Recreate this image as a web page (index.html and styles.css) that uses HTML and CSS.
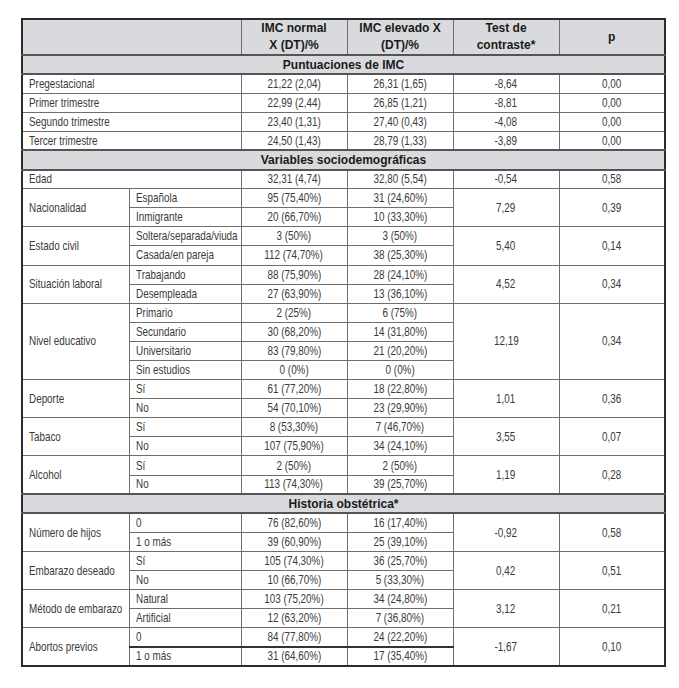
FILE: index.html
```html
<!DOCTYPE html>
<html>
    <head>
        <meta charset="utf-8">
        <title>IMC tabla</title>
        <link rel="stylesheet" href="styles.css">
    </head>
    <body>
        <table class="imc">
            <colgroup>
                <col class="c-label">
                <col class="c-sub">
                <col class="c-num">
                <col class="c-num">
                <col class="c-num">
                <col class="c-num">
            </colgroup>
            <thead>
                <tr class="head">
                    <th colspan="2"></th>
                    <th>IMC normal<br>X (DT)/%</th>
                    <th>IMC elevado X<br>(DT)/%</th>
                    <th>Test de<br>contraste*</th>
                    <th>p</th>
                </tr>
            </thead>
            <tbody>
                <tr class="section"><td colspan="6">Puntuaciones de IMC</td></tr>
                <tr><td colspan="2" class="lbl"><span>Pregestacional</span></td><td><span>21,22 (2,04)</span></td><td><span>26,31 (1,65)</span></td><td><span>-8,64</span></td><td><span>0,00</span></td></tr>
                <tr><td colspan="2" class="lbl"><span>Primer trimestre</span></td><td><span>22,99 (2,44)</span></td><td><span>26,85 (1,21)</span></td><td><span>-8,81</span></td><td><span>0,00</span></td></tr>
                <tr><td colspan="2" class="lbl"><span>Segundo trimestre</span></td><td><span>23,40 (1,31)</span></td><td><span>27,40 (0,43)</span></td><td><span>-4,08</span></td><td><span>0,00</span></td></tr>
                <tr><td colspan="2" class="lbl"><span>Tercer trimestre</span></td><td><span>24,50 (1,43)</span></td><td><span>28,79 (1,33)</span></td><td><span>-3,89</span></td><td><span>0,00</span></td></tr>

                <tr class="section"><td colspan="6">Variables sociodemográficas</td></tr>
                <tr><td colspan="2" class="lbl"><span>Edad</span></td><td><span>32,31 (4,74)</span></td><td><span>32,80 (5,54)</span></td><td><span>-0,54</span></td><td><span>0,58</span></td></tr>
                <tr><td rowspan="2" class="lbl"><span>Nacionalidad</span></td><td class="lbl"><span>Española</span></td><td><span>95 (75,40%)</span></td><td><span>31 (24,60%)</span></td><td rowspan="2"><span>7,29</span></td><td rowspan="2"><span>0,39</span></td></tr>
                <tr><td class="lbl"><span>Inmigrante</span></td><td><span>20 (66,70%)</span></td><td><span>10 (33,30%)</span></td></tr>
                <tr><td rowspan="2" class="lbl"><span>Estado civil</span></td><td class="lbl"><span>Soltera/separada/viuda</span></td><td><span>3 (50%)</span></td><td><span>3 (50%)</span></td><td rowspan="2"><span>5,40</span></td><td rowspan="2"><span>0,14</span></td></tr>
                <tr><td class="lbl"><span>Casada/en pareja</span></td><td><span>112 (74,70%)</span></td><td><span>38 (25,30%)</span></td></tr>
                <tr><td rowspan="2" class="lbl"><span>Situación laboral</span></td><td class="lbl"><span>Trabajando</span></td><td><span>88 (75,90%)</span></td><td><span>28 (24,10%)</span></td><td rowspan="2"><span>4,52</span></td><td rowspan="2"><span>0,34</span></td></tr>
                <tr><td class="lbl"><span>Desempleada</span></td><td><span>27 (63,90%)</span></td><td><span>13 (36,10%)</span></td></tr>
                <tr><td rowspan="4" class="lbl"><span>Nivel educativo</span></td><td class="lbl"><span>Primario</span></td><td><span>2 (25%)</span></td><td><span>6 (75%)</span></td><td rowspan="4"><span>12,19</span></td><td rowspan="4"><span>0,34</span></td></tr>
                <tr><td class="lbl"><span>Secundario</span></td><td><span>30 (68,20%)</span></td><td><span>14 (31,80%)</span></td></tr>
                <tr><td class="lbl"><span>Universitario</span></td><td><span>83 (79,80%)</span></td><td><span>21 (20,20%)</span></td></tr>
                <tr><td class="lbl"><span>Sin estudios</span></td><td><span>0 (0%)</span></td><td><span>0 (0%)</span></td></tr>
                <tr><td rowspan="2" class="lbl"><span>Deporte</span></td><td class="lbl"><span>Sí</span></td><td><span>61 (77,20%)</span></td><td><span>18 (22,80%)</span></td><td rowspan="2"><span>1,01</span></td><td rowspan="2"><span>0,36</span></td></tr>
                <tr><td class="lbl"><span>No</span></td><td><span>54 (70,10%)</span></td><td><span>23 (29,90%)</span></td></tr>
                <tr><td rowspan="2" class="lbl"><span>Tabaco</span></td><td class="lbl"><span>Sí</span></td><td><span>8 (53,30%)</span></td><td><span>7 (46,70%)</span></td><td rowspan="2"><span>3,55</span></td><td rowspan="2"><span>0,07</span></td></tr>
                <tr><td class="lbl"><span>No</span></td><td><span>107 (75,90%)</span></td><td><span>34 (24,10%)</span></td></tr>
                <tr><td rowspan="2" class="lbl"><span>Alcohol</span></td><td class="lbl"><span>Sí</span></td><td><span>2 (50%)</span></td><td><span>2 (50%)</span></td><td rowspan="2"><span>1,19</span></td><td rowspan="2"><span>0,28</span></td></tr>
                <tr><td class="lbl"><span>No</span></td><td><span>113 (74,30%)</span></td><td><span>39 (25,70%)</span></td></tr>

                <tr class="section"><td colspan="6">Historia obstétrica*</td></tr>
                <tr><td rowspan="2" class="lbl"><span>Número de hijos</span></td><td class="lbl"><span>0</span></td><td><span>76 (82,60%)</span></td><td><span>16 (17,40%)</span></td><td rowspan="2"><span>-0,92</span></td><td rowspan="2"><span>0,58</span></td></tr>
                <tr><td class="lbl"><span>1 o más</span></td><td><span>39 (60,90%)</span></td><td><span>25 (39,10%)</span></td></tr>
                <tr><td rowspan="2" class="lbl"><span>Embarazo deseado</span></td><td class="lbl"><span>Sí</span></td><td><span>105 (74,30%)</span></td><td><span>36 (25,70%)</span></td><td rowspan="2"><span>0,42</span></td><td rowspan="2"><span>0,51</span></td></tr>
                <tr><td class="lbl"><span>No</span></td><td><span>10 (66,70%)</span></td><td><span>5 (33,30%)</span></td></tr>
                <tr><td rowspan="2" class="lbl"><span>Método de embarazo</span></td><td class="lbl"><span>Natural</span></td><td><span>103 (75,20%)</span></td><td><span>34 (24,80%)</span></td><td rowspan="2"><span>3,12</span></td><td rowspan="2"><span>0,21</span></td></tr>
                <tr><td class="lbl"><span>Artificial</span></td><td><span>12 (63,20%)</span></td><td><span>7 (36,80%)</span></td></tr>
                <tr><td rowspan="2" class="lbl"><span>Abortos previos</span></td><td class="lbl"><span>0</span></td><td><span>84 (77,80%)</span></td><td><span>24 (22,20%)</span></td><td rowspan="2"><span>-1,67</span></td><td rowspan="2"><span>0,10</span></td></tr>
                <tr class="dark-top"><td class="lbl"><span>1 o más</span></td><td><span>31 (64,60%)</span></td><td><span>17 (35,40%)</span></td></tr>
            </tbody>
        </table>
    </body>
</html>
```

FILE: styles.css
```css
body{
    margin:0;
    background:#fff;
}

.imc{
    border-collapse:collapse;
    table-layout:fixed;
    width:643px;
    margin:18px 0 0 21px;
    border:2px solid #2b2b2b;
    font-family:"Liberation Sans",Arial,sans-serif;
    font-size:12px;
    color:#3a3a3a;
}
.imc .c-label{ width:107px; }
.imc .c-sub{ width:112px; }
.imc .c-num{ width:106px; }

.imc th,
.imc td{
    border:1px solid #6e6e6e;
    padding:0 6px;
    text-align:center;
    vertical-align:middle;
    line-height:14px;
    white-space:nowrap;
    overflow:visible;
}
.imc tr{
    height:19.1px;
}

/* condensed look of the printed table */
.imc td span{
    display:inline-block;
    font-size:13px;
    transform:scaleX(0.76);
    transform-origin:center;
}
.imc td.lbl span{
    transform-origin:left center;
}

.imc .head{
    height:36px;
}
.imc .head th{
    background:#d9dadd;
    font-weight:bold;
    color:#1a1a1a;
    line-height:17px;
    border-bottom:2px solid #555;
}

.imc .section td{
    background:#d9dadd;
    font-weight:bold;
    color:#1a1a1a;
    border-top:2px solid #555;
    border-bottom:2px solid #555;
}

.imc .lbl{
    text-align:left;
}

.imc .dark-top td{
    border-top:2px solid #333;
}
```
